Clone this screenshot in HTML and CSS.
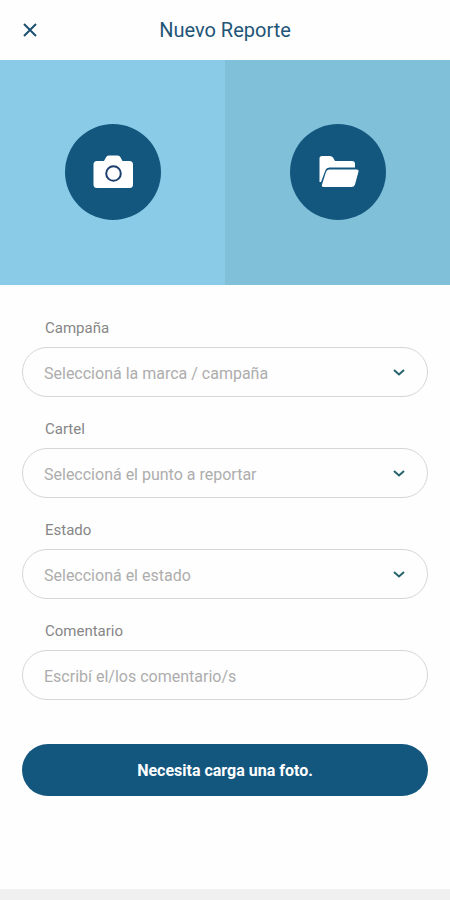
FILE: index.html
```html
<!DOCTYPE html>
<html lang="es">
<head>
<meta charset="utf-8">
<meta name="viewport" content="width=device-width, initial-scale=1">
<title>Nuevo Reporte</title>
<link rel="stylesheet" href="styles.css">
</head>
<body>
<header class="topbar">
  <button class="close" type="button" aria-label="Cerrar">
    <svg width="14" height="14" viewBox="0 0 14 14" aria-hidden="true"><path d="M1 1L13 13M13 1L1 13"/></svg>
  </button>
  <h1 class="title">Nuevo Reporte</h1>
</header>
<main>
  <section class="sources">
    <div class="source source-camera">
      <button class="round" type="button" aria-label="Sacar una foto">
        <svg width="42" height="34" viewBox="0 0 42 34" aria-hidden="true">
          <path fill="#fff" d="M5 6H12L14.200 2Q15 .5 16.500 .5H26Q27.500 .5 28.300 2L30.500 6H37.500Q41 6 41 9.500V29.500Q41 33 37.500 33H5Q1.500 33 1.500 29.500V9.500Q1.500 6 5 6Z"/>
          <circle cx="21.500" cy="18.500" r="7.300" fill="#fff" stroke="#1d3f70" stroke-width="2"/>
        </svg>
      </button>
    </div>
    <div class="source source-folder">
      <button class="round" type="button" aria-label="Elegir un archivo">
        <svg width="44" height="34" viewBox="-1 0 44 34" aria-hidden="true">
          <path fill="#fff" d="M2.500 27V3.500Q2.500 1 5 1H13Q15 1 16 2.500L18 6H35Q38 6 38 9V12.500H12.500Q9.500 12.500 8.500 15L4 27Z"/>
          <path fill="#fff" d="M12 14.500H39.500Q42.300 14.500 41.400 17L38 29.500Q37.200 32 34.500 32H6.800Q4.200 32 5 29.500L9 17Q9.800 14.500 12 14.500Z"/>
        </svg>
      </button>
    </div>
  </section>
  <form class="form">
    <div class="field">
      <label class="label" for="campana">Campaña</label>
      <div class="picker">
        <select class="control" id="campana"><option>Seleccioná la marca / campaña</option></select>
        <svg class="chevron" width="12" height="8" viewBox="0 0 12 8" aria-hidden="true"><path d="M1 2L6 6.500L11 2"/></svg>
      </div>
    </div>
    <div class="field">
      <label class="label" for="cartel">Cartel</label>
      <div class="picker">
        <select class="control" id="cartel"><option>Seleccioná el punto a reportar</option></select>
        <svg class="chevron" width="12" height="8" viewBox="0 0 12 8" aria-hidden="true"><path d="M1 2L6 6.500L11 2"/></svg>
      </div>
    </div>
    <div class="field">
      <label class="label" for="estado">Estado</label>
      <div class="picker">
        <select class="control" id="estado"><option>Seleccioná el estado</option></select>
        <svg class="chevron" width="12" height="8" viewBox="0 0 12 8" aria-hidden="true"><path d="M1 2L6 6.500L11 2"/></svg>
      </div>
    </div>
    <div class="field">
      <label class="label" for="comentario">Comentario</label>
      <input class="control" id="comentario" type="text" placeholder="Escribí el/los comentario/s">
    </div>
    <button class="submit" type="submit">Necesita carga una foto.</button>
  </form>
</main>
<footer class="bottom"></footer>
</body>
</html>
```
FILE: styles.css
```css
* {
  box-sizing: border-box;
}

body {
  margin: 0;
  min-height: 100vh;
  display: flex;
  flex-direction: column;
  background: #fefefe;
  font-family: Roboto, "Liberation Sans", sans-serif;
}

main {
  flex: 1;
}

button {
  border: 0;
  padding: 0;
  font: inherit;
  cursor: pointer;
}

svg {
  display: block;
}

.topbar {
  display: grid;
  grid-template-columns: 44px 1fr 44px;
  align-items: center;
  height: 60px;
}

.close {
  display: flex;
  align-items: center;
  justify-content: flex-end;
  height: 44px;
  padding-right: 7px;
  background: none;
}

.close path {
  fill: none;
  stroke: #1b5070;
  stroke-width: 2;
}

.title {
  margin: 0;
  color: #1f5577;
  font-size: 20px;
  font-weight: 400;
  line-height: 24px;
  text-align: center;
}

.sources {
  display: grid;
  grid-template-columns: 1fr 1fr;
}

.source {
  display: flex;
  align-items: center;
  justify-content: center;
  height: 225px;
  padding-bottom: 1px;
}

.source-camera {
  background: #8acbe7;
}

.source-folder {
  background: #80c0d9;
}

.round {
  display: flex;
  align-items: center;
  justify-content: center;
  width: 96px;
  height: 96px;
  border-radius: 50%;
  background: #13577f;
}

.form {
  display: flex;
  flex-direction: column;
  gap: 22px;
  padding: 33px 22px;
}

.field {
  display: flex;
  flex-direction: column;
  gap: 9px;
}

.label {
  padding-left: 23px;
  color: #868686;
  font-size: 15px;
  line-height: 20px;
}

.picker {
  display: grid;
  align-items: center;
}

.picker > * {
  grid-area: 1 / 1;
}

.control {
  appearance: none;
  width: 100%;
  height: 50px;
  margin: 0;
  padding: 3px 21px 0;
  border: 1px solid #d6d6d6;
  border-radius: 25px;
  background: transparent;
  color: #adadad;
  font: 16px/20px Roboto, "Liberation Sans", sans-serif;
}

.control::placeholder {
  color: #adadad;
  opacity: 1;
}

.chevron {
  justify-self: end;
  margin-right: 23px;
  pointer-events: none;
}

.chevron path {
  fill: none;
  stroke: #26626c;
  stroke-width: 2;
}

.submit {
  height: 52px;
  margin-top: 22px;
  padding-top: 2px;
  border-radius: 26px;
  background: #13577f;
  color: #fff;
  font-size: 16px;
  font-weight: 700;
  line-height: 20px;
}

.bottom {
  height: 11px;
  background: #f0f0f0;
}
```
